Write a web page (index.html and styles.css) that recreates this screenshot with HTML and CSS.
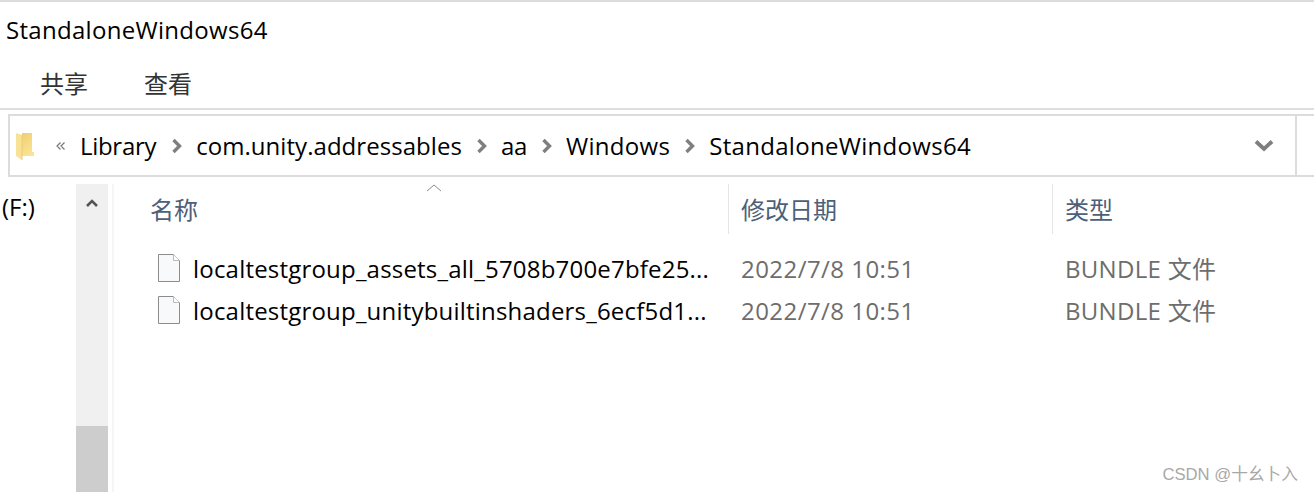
FILE: index.html
```html
<!DOCTYPE html>
<html lang="zh-CN">
<head>
<meta charset="utf-8">
<title>StandaloneWindows64</title>
<link rel="stylesheet" href="styles.css">
</head>
<body>
<div class="window">
  <div class="titlebar">StandaloneWindows64</div>
  <div class="ribbon">
    <span class="tab">共享</span>
    <span class="tab">查看</span>
  </div>
  <div class="address-row">
    <div class="address">
      <svg class="folder" width="19" height="28" viewBox="0 0 19 28">
        <defs><linearGradient id="fg" x1="0" y1="0" x2="0.6" y2="1"><stop offset="0" stop-color="#eecb6c"/><stop offset="1" stop-color="#fbe394"/></linearGradient></defs>
        <path d="M0 0H16V19H18V23H6V0Z" fill="url(#fg)"/>
        <path d="M0 0L6 2V27L0 23Z" fill="#f9e295"/>
        <path d="M6 2V27" stroke="#eccb72" stroke-width="1"/>
      </svg>
      <svg class="overflow" width="9" height="8" viewBox="0 0 9 8"><path d="M4.500 .5L1 4l3.500 3.500M8.500 .5L5 4l3.500 3.500" fill="none" stroke="#777" stroke-width="1.200"/></svg>
      <span class="crumb crumb-library">Library</span>
      <svg class="sep" width="12" height="16" viewBox="0 0 12 16"><path d="M2.500 2L8.500 8 2.500 14" fill="none" stroke="#7f7f7f" stroke-width="3.400"/></svg>
      <span class="crumb crumb-path">com.unity.addressables</span>
      <svg class="sep" width="12" height="16" viewBox="0 0 12 16"><path d="M2.500 2L8.500 8 2.500 14" fill="none" stroke="#7f7f7f" stroke-width="3.400"/></svg>
      <span class="crumb crumb-short">aa</span>
      <svg class="sep" width="12" height="16" viewBox="0 0 12 16"><path d="M2.500 2L8.500 8 2.500 14" fill="none" stroke="#7f7f7f" stroke-width="3.400"/></svg>
      <span class="crumb crumb-wide">Windows</span>
      <svg class="sep" width="12" height="16" viewBox="0 0 12 16"><path d="M2.500 2L8.500 8 2.500 14" fill="none" stroke="#7f7f7f" stroke-width="3.400"/></svg>
      <span class="crumb crumb-wide">StandaloneWindows64</span>
      <svg class="dropdown" width="20" height="13" viewBox="0 0 20 13"><path d="M2 2.500L10 10 18 2.500" fill="none" stroke="#7f7f7f" stroke-width="3.800"/></svg>
      <div class="address-end"></div>
    </div>
  </div>
  <div class="main">
    <aside class="sidebar">
      <div class="drive">(F:)</div>
      <div class="scrollbar">
        <svg class="scroll-up" width="14" height="10" viewBox="0 0 14 10"><path d="M2 8L7 3l5 5" fill="none" stroke="#555" stroke-width="2.600"/></svg>
        <div class="scroll-thumb"></div>
      </div>
    </aside>
    <section class="list">
      <div class="list-head">
        <div class="col col-name">名称
          <svg class="sort" width="16" height="8" viewBox="0 0 16 8"><path d="M1 7L8 1l7 6" fill="none" stroke="#8a8a8a" stroke-width="1"/></svg>
        </div>
        <div class="col col-date">修改日期</div>
        <div class="col col-type">类型</div>
      </div>
      <div class="row">
        <div class="cell-name">
          <svg class="file" width="22" height="28" viewBox="0 0 22 28"><path d="M.5.500H15.500L21.500 6.500V27.500H.5Z" fill="#f8f9fa" stroke="#8c8c8c"/><path d="M15.500.500V6.500H21.500" fill="#fff" stroke="#bbb"/></svg>
          <span class="fname">localtestgroup_assets_all_5708b700e7bfe25...</span>
        </div>
        <div class="cell-date">2022/7/8 10:51</div>
        <div class="cell-type">BUNDLE 文件</div>
      </div>
      <div class="row">
        <div class="cell-name">
          <svg class="file" width="22" height="28" viewBox="0 0 22 28"><path d="M.5.500H15.500L21.500 6.500V27.500H.5Z" fill="#f8f9fa" stroke="#8c8c8c"/><path d="M15.500.500V6.500H21.500" fill="#fff" stroke="#bbb"/></svg>
          <span class="fname">localtestgroup_unitybuiltinshaders_6ecf5d1...</span>
        </div>
        <div class="cell-date">2022/7/8 10:51</div>
        <div class="cell-type">BUNDLE 文件</div>
      </div>
    </section>
  </div>
  <div class="watermark">CSDN @十幺卜入</div>
</div>
</body>
</html>
```
FILE: styles.css
```css
* { box-sizing: border-box; }
html, body { margin: 0; padding: 0; background: #fff; }
body {
  width: 1314px;
  height: 492px;
  overflow: hidden;
  font-family: "Open Sans", "Noto Sans CJK SC", sans-serif;
  color: #000;
}
.window {
  position: relative;
  width: 1314px;
  height: 492px;
  border-top: 2px solid #dcdcdc;
  display: flex;
  flex-direction: column;
}
.titlebar {
  height: 56px;
  padding: 8px 0 0 6px;
  font-size: 24px;
  line-height: 40px;
  color: #000;
  letter-spacing: 0.3px;
}
.ribbon {
  height: 52px;
  padding-left: 40px;
  display: flex;
  gap: 56px;
  border-bottom: 2px solid #dedede;
  line-height: 50px;
  font-size: 24px;
  font-family: "Noto Sans CJK SC", sans-serif;
  color: #333;
}
.address-row {
  padding: 4px 0 0 8px;
  height: 74px;
}
.address {
  height: 63px;
  border: 2px solid #dcdcdc;
  border-right: 0;
  display: flex;
  align-items: center;
  font-size: 24px;
  color: #000;
  padding-left: 6px;
}
.crumb-library { letter-spacing: -0.3px; margin-right: 1px; }
.crumb-path { letter-spacing: 0.05px; }
.crumb-short { letter-spacing: -0.3px; }
.crumb-wide { letter-spacing: 0.3px; }
.folder { margin: 2px 21px 0 0; }
.overflow { margin-right: 15px; }
.sep { margin: 0 13px 0 14px; }
.dropdown { margin-left: auto; margin-right: 21px; }
.address-end {
  align-self: stretch;
  width: 19px;
  border-left: 2px solid #dcdcdc;
}
.main {
  flex: 1;
  display: flex;
  min-height: 0;
}
.sidebar {
  width: 114px;
  display: flex;
  justify-content: space-between;
  border-right: 2px solid #f5f5f5;
  padding-right: 4px;
}
.drive {
  font-size: 24px;
  line-height: 28px;
  padding: 9px 0 0 2px;
  color: #000;
}
.scrollbar {
  width: 32px;
  background: #f0f0f0;
  display: flex;
  flex-direction: column;
  align-items: center;
  padding-top: 14px;
}
.scroll-thumb {
  margin-top: auto;
  width: 100%;
  height: 66px;
  background: #cdcdcd;
}
.list { flex: 1; position: relative; }
.list-head {
  display: flex;
  height: 50px;
  font-size: 24px;
  font-family: "Noto Sans CJK SC", sans-serif;
  color: #4c607a;
  line-height: 50px;
}
.col { position: relative; padding-left: 36px; border-right: 1px solid #e5e5e5; }
.col-name { width: 615px; }
.col-date { width: 324px; padding-left: 12px; }
.col-type { padding-left: 12px; border-right: 0; }
.sort { position: absolute; left: 312px; top: 0; }
.row {
  display: flex;
  height: 42px;
  align-items: center;
  font-size: 24px;
  line-height: 32px;
}
.list-head + .row { margin-top: 14px; }
.file { margin-bottom: 3px; }
.cell-name {
  width: 615px;
  padding-left: 44px;
  display: flex;
  align-items: center;
  gap: 13px;
  color: #000;
  white-space: nowrap;
  letter-spacing: 0.2px;
}
.cell-date { width: 324px; padding-left: 12px; color: #6d6d6d; letter-spacing: 0.45px; }
.cell-type { padding-left: 12px; color: #6d6d6d; letter-spacing: 0.3px; }
.watermark {
  position: absolute;
  right: 16px;
  bottom: 7px;
  font-family: "Liberation Sans", "Noto Sans CJK SC", sans-serif;
  font-size: 16.700px;
  color: #a8a8a8;
}
```
